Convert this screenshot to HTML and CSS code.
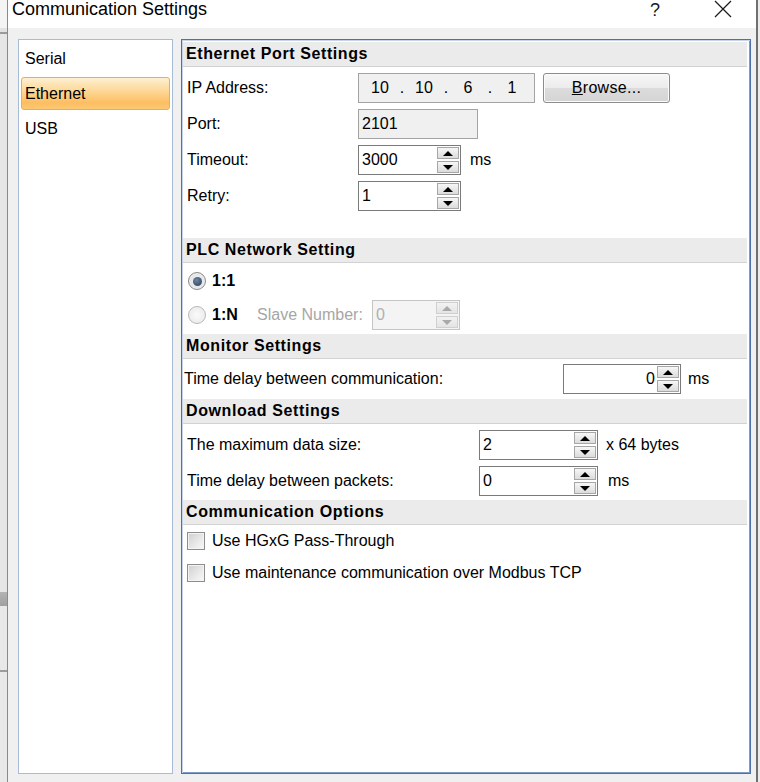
FILE: index.html
```html
<!DOCTYPE html>
<html>
<head>
<meta charset="utf-8">
<title>Communication Settings</title>
<link rel="stylesheet" href="styles.css">
</head>
<body>
<div class="screen">
  <div class="behind"></div>
  <div class="dialog">
    <div class="titlebar">
      <span class="title">Communication Settings</span>
      <span class="help">?</span>
      <svg class="close" width="18" height="18" viewBox="0 0 18 18"><path d="M1 1 L17 17 M17 1 L1 17" stroke="#1a1a1a" stroke-width="1.2" fill="none"/></svg>
    </div>
    <div class="body">
      <div class="nav">
        <div class="nav-item">Serial</div>
        <div class="nav-item selected">Ethernet</div>
        <div class="nav-item">USB</div>
      </div>
      <div class="content">
        <div class="section-head first">Ethernet Port Settings</div>

        <div class="row mt6">
          <span class="label w171">IP Address:</span>
          <div class="field ip">
            <span class="seg">10</span><span class="dot">.</span><span class="seg">10</span><span class="dot">.</span><span class="seg">6</span><span class="dot">.</span><span class="seg">1</span>
          </div>
          <div class="button browse"><u>B</u>rowse...</div>
        </div>

        <div class="row mt6">
          <span class="label w171">Port:</span>
          <div class="field readonly port">2101</div>
        </div>

        <div class="row mt6">
          <span class="label w171">Timeout:</span>
          <div class="field spin w103">
            <span class="value">3000</span>
            <span class="spinner"><span class="sbtn"><i class="up"></i></span><span class="sbtn"><i class="down"></i></span></span>
          </div>
          <span class="unit ml9">ms</span>
        </div>

        <div class="row mt6">
          <span class="label w171">Retry:</span>
          <div class="field spin w103">
            <span class="value">1</span>
            <span class="spinner"><span class="sbtn"><i class="up"></i></span><span class="sbtn"><i class="down"></i></span></span>
          </div>
        </div>

        <div class="section-head mt27">PLC Network Setting</div>

        <div class="row mt3">
          <span class="radio checked"></span>
          <span class="opt">1:1</span>
        </div>

        <div class="row mt4">
          <span class="radio disabled"></span>
          <span class="opt w45">1:N</span>
          <span class="label disabled-text w115">Slave Number:</span>
          <div class="field spin disabled w88">
            <span class="value">0</span>
            <span class="spinner"><span class="sbtn"><i class="up"></i></span><span class="sbtn"><i class="down"></i></span></span>
          </div>
        </div>

        <div class="section-head mt4">Monitor Settings</div>

        <div class="row mt5 pl1">
          <span class="label w379">Time delay between communication:</span>
          <div class="field spin w118 right">
            <span class="value">0</span>
            <span class="spinner"><span class="sbtn"><i class="up"></i></span><span class="sbtn"><i class="down"></i></span></span>
          </div>
          <span class="unit ml7">ms</span>
        </div>

        <div class="section-head mt5">Download Settings</div>

        <div class="row mt6">
          <span class="label w292">The maximum data size:</span>
          <div class="field spin w119">
            <span class="value">2</span>
            <span class="spinner"><span class="sbtn"><i class="up"></i></span><span class="sbtn"><i class="down"></i></span></span>
          </div>
          <span class="unit ml8">x 64 bytes</span>
        </div>

        <div class="row mt6">
          <span class="label w292">Time delay between packets:</span>
          <div class="field spin w119">
            <span class="value">0</span>
            <span class="spinner"><span class="sbtn"><i class="up"></i></span><span class="sbtn"><i class="down"></i></span></span>
          </div>
          <span class="unit ml10">ms</span>
        </div>

        <div class="section-head mt4">Communication Options</div>

        <div class="row mt1">
          <span class="check"></span>
          <span class="opt-text">Use HGxG Pass-Through</span>
        </div>
        <div class="row mt2">
          <span class="check"></span>
          <span class="opt-text">Use maintenance communication over Modbus TCP</span>
        </div>
      </div>
    </div>
  </div>
</div>
</body>
</html>
```

FILE: styles.css
```css
* { box-sizing: border-box; }

html, body {
  margin: 0;
  padding: 0;
  width: 760px;
  height: 782px;
  overflow: hidden;
  background: #ececec;
  font-family: "Liberation Sans", Arial, sans-serif;
  font-size: 16px;
  color: #000;
}

.screen {
  display: flex;
  width: 760px;
  height: 782px;
}

.behind {
  width: 7px;
  height: 782px;
  flex: none;
  background:
    linear-gradient(to bottom,
      #f4f4f4 0, #f4f4f4 28px,
      #e2e2e2 28px, #e2e2e2 32px,
      #9a9a9a 32px, #9a9a9a 34px,
      #e6e6e6 34px, #e6e6e6 592px,
      #b4b4b4 592px, #a0a0a0 606px,
      #e8e8e8 606px, #e8e8e8 670px,
      #9c9c9c 670px, #9c9c9c 672px,
      #e8e8e8 672px);
}

.dialog {
  width: 751px;
  height: 782px;
  flex: none;
  border-left: 1px solid #8a8a8a;
  border-right: 2px solid #707070;
  background: #f0f0f0;
  display: flex;
  flex-direction: column;
}

.titlebar {
  height: 28px;
  flex: none;
  background: #ffffff;
  display: flex;
  align-items: flex-start;
  padding-left: 4px;
}

.title {
  font-family: "Liberation Sans", Arial, sans-serif;
  font-size: 18px;
  line-height: 18px;
  color: #000;
  flex: 1;
}

.help {
  font-size: 18px;
  line-height: 18px;
  margin-top: 1px;
  width: 12px;
  color: #1a1a1a;
}

.close {
  margin-left: 52px;
  margin-right: 24px;
  margin-top: 0;
}

.body {
  flex: 1;
  display: flex;
  padding: 11px 5px 8px 10px;
  gap: 8px;
}

.nav {
  width: 155px;
  flex: none;
  background: #fff;
  border: 1px solid #a7bdd6;
  padding: 2px 2px;
  display: flex;
  flex-direction: column;
  gap: 2px;
}

.nav-item {
  height: 33px;
  line-height: 31px;
  padding-left: 3px;
  border: 1px solid transparent;
  border-radius: 3px;
}

.nav-item.selected {
  border-color: #e1b25c;
  background: linear-gradient(to bottom, #feefd2 0%, #fdd99a 40%, #fcbe62 80%, #fcc872 100%);
}

.content {
  width: 570px;
  flex: none;
  background: #fff;
  border: 1px solid #4f71ab;
  box-shadow: inset 1px 1px 0 #c7d4e8, inset -1px -1px 0 #7f9cc9;
  display: flex;
  flex-direction: column;
  padding: 1px 3px 0 1px;
}

.section-head {
  height: 25px;
  flex: none;
  background: #ebebeb;
  border-bottom: 1px solid #d2d2d2;
  font-weight: bold;
  letter-spacing: 0.6px;
  line-height: 24px;
  padding-left: 3px;
  white-space: nowrap;
}

.section-head.first { margin-top: 1px; }

.mt1 { margin-top: 1px; }
.mt2 { margin-top: 2px; }
.mt3 { margin-top: 3px; }
.mt4 { margin-top: 4px; }
.mt5 { margin-top: 5px; }
.mt6 { margin-top: 6px; }
.mt27 { margin-top: 27px; }

.row {
  height: 30px;
  flex: none;
  display: flex;
  align-items: center;
  padding-left: 4px;
  white-space: nowrap;
}

.row.pl1 { padding-left: 1px; }

.label { flex: none; }
.w171 { width: 171px; }
.w292 { width: 292px; }
.w379 { width: 379px; }
.w115 { width: 115px; }
.w45 { width: 45px; }

.unit { flex: none; }
.ml7 { margin-left: 7px; }
.ml8 { margin-left: 8px; }
.ml9 { margin-left: 9px; }
.ml10 { margin-left: 10px; }

.field {
  height: 30px;
  border: 1px solid #7a7a7a;
  background: #fff;
  display: flex;
  align-items: center;
  flex: none;
}

.field.readonly {
  background: #f0f0f0;
  border-color: #a3a3a3;
}

.field.port {
  width: 120px;
  padding-left: 3px;
}

.field.ip {
  width: 177px;
  background: #f0f0f0;
  border-color: #a3a3a3;
  padding-left: 4px;
}

.seg {
  width: 34px;
  text-align: center;
}

.dot {
  width: 10px;
  text-align: center;
}

.button {
  height: 30px;
  border: 1px solid #8c8c8c;
  border-radius: 3px;
  background: linear-gradient(to bottom, #f7f7f7 0%, #ececec 50%, #dcdcdc 51%, #d4d4d4 100%);
  box-shadow: inset 0 0 0 1px #fbfbfb;
  display: flex;
  align-items: center;
  justify-content: center;
  flex: none;
}

.browse {
  width: 127px;
  margin-left: 8px;
  letter-spacing: 0.3px;
}

.w88 { width: 88px; }
.w103 { width: 103px; }
.w118 { width: 118px; }
.w119 { width: 119px; }

.field.spin {
  padding: 1px 1px 1px 3px;
}

.field.spin .value {
  flex: 1;
}

.field.right .value {
  text-align: right;
  padding-right: 2px;
}

.spinner {
  width: 22px;
  height: 26px;
  display: flex;
  flex-direction: column;
  gap: 2px;
  flex: none;
}

.sbtn {
  flex: 1;
  border: 1px solid #a6a6a6;
  background: linear-gradient(to bottom, #f6f6f6, #dcdcdc);
  display: flex;
  align-items: center;
  justify-content: center;
}

.sbtn i {
  width: 0;
  height: 0;
  border-left: 5px solid transparent;
  border-right: 5px solid transparent;
}

.sbtn i.up { border-bottom: 5px solid #000; }
.sbtn i.down { border-top: 5px solid #000; }

.field.disabled {
  border-color: #c5c5c5;
  background: #f4f4f4;
  color: #b0b0b0;
}

.field.disabled .sbtn {
  border-color: #d0d0d0;
  background: linear-gradient(to bottom, #f2f2f2, #e4e4e4);
}

.field.disabled .sbtn i.up { border-bottom-color: #a9a9a9; }
.field.disabled .sbtn i.down { border-top-color: #a9a9a9; }

.disabled-text { color: #a6a6a6; }

.radio {
  width: 18px;
  height: 18px;
  border-radius: 50%;
  border: 1px solid #8a8a8a;
  background: radial-gradient(circle at 50% 50%, #f8f8f8 0, #d9d9d9 100%);
  box-shadow: inset 0 0 0 1px #f0f0f0;
  margin-left: 1px;
  flex: none;
  display: flex;
  align-items: center;
  justify-content: center;
}

.radio.checked::after {
  content: "";
  width: 9px;
  height: 9px;
  border-radius: 50%;
  background: radial-gradient(circle at 40% 35%, #6f86a3 0, #334a66 80%);
}

.radio.disabled {
  border-color: #b8b8b8;
  background: radial-gradient(circle at 50% 50%, #fbfbfb 0, #e6e6e6 100%);
}

.opt {
  font-weight: bold;
  margin-left: 6px;
  flex: none;
}

.check {
  width: 18px;
  height: 18px;
  border: 1px solid #8c8c8c;
  background: linear-gradient(135deg, #cfcfcf 0, #eeeeee 70%, #f8f8f8 100%);
  box-shadow: inset 0 0 0 1px #f4f4f4;
  flex: none;
}

.opt-text {
  margin-left: 7px;
}
```
